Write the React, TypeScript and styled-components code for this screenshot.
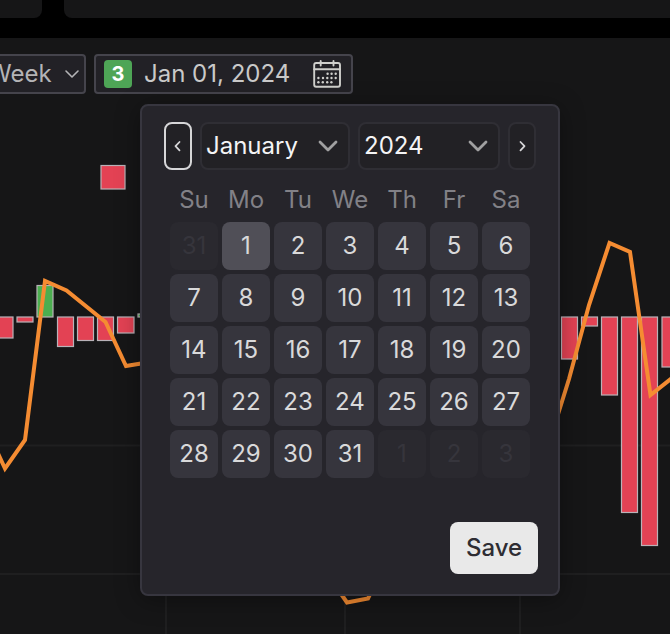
import React, { useState } from "react";
import styled, { createGlobalStyle, css } from "styled-components";

const GlobalStyle = createGlobalStyle`
  *, *::before, *::after { box-sizing: border-box; }
  body {
    margin: 0;
    background: #000;
    color: #c9c9c9;
    font-family: Inter, "Liberation Sans", sans-serif;
    font-size: 24px;
    line-height: 32px;
    overflow: hidden;
  }
  button, select, input { font: inherit; color: inherit; }
`;

const Page = styled.div`
  display: flex;
  flex-direction: column;
  gap: 20px;
  min-height: 100vh;
  overflow: hidden;
`;

const CardRow = styled.div`
  display: grid;
  grid-template-columns: 42px 1fr;
  gap: 22px;
`;

const CardEdge = styled.div<{ $side: "left" | "right" }>`
  height: 18px;
  background: #161617;
  border-radius: ${(p) => (p.$side === "left" ? "0 0 8px 0" : "0 0 0 8px")};
`;

const Panel = styled.main`
  flex: 1;
  display: flex;
  flex-direction: column;
  background: #161617;
`;

const Toolbar = styled.div`
  display: flex;
  gap: 8px;
  margin-left: -22px;
  padding-top: 16px;
`;

const SelectBox = styled.div<{ $kind: "toolbar" | "calendar" }>`
  display: grid;
  align-items: center;
  ${(p) =>
    p.$kind === "toolbar"
      ? css`
          width: 108px;
        `
      : css`
          flex: 1 1 auto;
          min-width: 0;
        `}
  > * {
    grid-area: 1 / 1;
  }
  > svg {
    justify-self: end;
    margin-right: ${(p) => (p.$kind === "toolbar" ? 5 : 11)}px;
    pointer-events: none;
  }
`;

const Select = styled.select<{ $kind: "toolbar" | "calendar" }>`
  appearance: none;
  width: 100%;
  outline: none;
  ${(p) =>
    p.$kind === "toolbar"
      ? css`
          height: 40px;
          padding: 0 0 0 8px;
          background: #222126;
          border: 2px solid #45444c;
          border-radius: 4px;
          color: #b4b4b6;
        `
      : css`
          height: 48px;
          padding: 0 0 0 4px;
          background: #222125;
          border: 2px solid #2f2e34;
          border-radius: 8px;
          color: #f4f4f5;
        `}
`;

const DateField = styled.div`
  position: relative;
`;

const DateButton = styled.button`
  display: flex;
  align-items: center;
  width: 259px;
  height: 40px;
  padding: 0 9px 0 8px;
  background: #222126;
  border: 2px solid #45444c;
  border-radius: 4px;
  color: #c9c9c9;
  white-space: nowrap;

  svg {
    margin-left: auto;
  }
`;

const CountBadge = styled.span`
  width: 28px;
  height: 28px;
  margin-right: 12px;
  border-radius: 4px;
  background: #4ea556;
  color: #fff;
  font-size: 20px;
  font-weight: 700;
  line-height: 28px;
  text-align: center;
`;

const Popover = styled.section`
  position: absolute;
  top: 50px;
  left: 46px;
  width: 420px;
  display: flex;
  flex-direction: column;
  padding: 16px 20px 20px;
  background: #26252b;
  border: 2px solid #37363f;
  border-radius: 8px;
  box-shadow: 0 4px 24px rgba(0, 0, 0, 0.35);
`;

const MonthBar = styled.div`
  display: flex;
  gap: 8px;
  padding: 0 2px;

  > div:nth-of-type(1) {
    flex-basis: 150px;
  }
  > div:nth-of-type(2) {
    flex-basis: 142px;
  }
`;

const StepButton = styled.button`
  display: grid;
  place-items: center;
  flex: 0 0 28px;
  height: 48px;
  padding: 0;
  background: #222125;
  border: 2px solid #2f2e34;
  border-radius: 8px;
  color: #d6d6d8;

  &:focus {
    outline: none;
    border-color: #d6d6d8;
  }
`;

const Calendar = styled.table`
  align-self: center;
  margin-top: 8px;
  border-collapse: separate;
  border-spacing: 4px;
`;

const Weekday = styled.th`
  width: 48px;
  height: 36px;
  padding: 0;
  color: #828187;
  font-weight: 400;
`;

const DayCell = styled.td`
  padding: 0;
`;

const DayButton = styled.button<{ $outside: boolean; $selected: boolean }>`
  display: block;
  width: 48px;
  height: 48px;
  padding: 0;
  border: 0;
  border-radius: 8px;
  text-align: center;
  background: ${(p) => (p.$selected ? "#504f57" : p.$outside ? "#2a292f" : "#36353d")};
  color: ${(p) => (p.$outside ? "#36353c" : "#d9d9da")};
`;

const Actions = styled.div`
  display: flex;
  justify-content: flex-end;
  margin-top: 40px;
`;

const SaveButton = styled.button`
  width: 88px;
  height: 52px;
  padding: 0;
  border: 0;
  border-radius: 8px;
  background: #e9e9e9;
  color: #2e2d33;
  font-weight: 500;
`;

const ChartSvg = styled.svg`
  display: block;
  flex: 1;
  width: 100%;
  min-height: 540px;
`;

const Chevron = ({ size }: { size: "small" | "large" }) =>
  size === "small" ? (
    <svg width="18" height="12" viewBox="0 0 18 12" fill="none" stroke="#b4b4b6" strokeWidth="1.6" strokeLinecap="round" strokeLinejoin="round" aria-hidden="true">
      <path d="M3 3l6 6 6-6" />
    </svg>
  ) : (
    <svg width="22" height="16" viewBox="0 0 22 16" fill="none" stroke="#a0a0a1" strokeWidth="2.8" strokeLinecap="round" strokeLinejoin="round" aria-hidden="true">
      <path d="M3 4l8 8 8-8" />
    </svg>
  );

const StepIcon = ({ direction }: { direction: "prev" | "next" }) => (
  <svg width="12" height="14" viewBox="0 0 12 14" fill="none" stroke="currentColor" strokeWidth="1.8" strokeLinecap="round" strokeLinejoin="round" aria-hidden="true">
    <path d={direction === "prev" ? "M7.5 3L3.500 7.2l4 4.2" : "M4.500 3l4 4.200-4 4.200"} />
  </svg>
);

const iconDots = [
  [15.6, 14.7], [19.6, 14.7], [23.7, 14.7],
  [6.4, 19], [11, 19], [15.3, 19], [19.5, 19], [23.7, 19],
  [6.4, 23.3], [10.8, 23.3], [15.2, 23.3], [19.4, 23.3],
];

const CalendarIcon = () => (
  <svg width="30" height="30" viewBox="0 0 30 30" fill="none" stroke="#cfcfcc" strokeWidth="1.9" strokeLinecap="round" aria-hidden="true">
    <rect x="2.200" y="4" width="25.800" height="23.800" rx="2" />
    <path d="M2.200 10.300h25.800M8.700 2v4.500M21.500 2v4.500" />
    {iconDots.map(([x, y]) => (
      <circle key={`${x}-${y}`} cx={x} cy={y} r="1.2" fill="#cfcfcc" stroke="none" />
    ))}
  </svg>
);

const bars = [
  { x: -4, y: 223, w: 17, h: 21 },
  { x: 17, y: 223, w: 16, h: 5 },
  { x: 37, y: 191.5, w: 16, h: 31.5, up: true },
  { x: 57.5, y: 223, w: 16, h: 29.5 },
  { x: 77.5, y: 223, w: 16, h: 23.5 },
  { x: 97.5, y: 223, w: 16, h: 23.5 },
  { x: 117.5, y: 223, w: 16.5, h: 16 },
  { x: 138, y: 220, w: 16, h: 3, up: true },
  { x: 101, y: 71.5, w: 24, h: 23.5 },
  { x: 561.5, y: 223, w: 16, h: 42 },
  { x: 581.5, y: 223, w: 16, h: 9 },
  { x: 601.5, y: 223, w: 16, h: 78 },
  { x: 621.5, y: 223, w: 16, h: 195.5 },
  { x: 641.5, y: 223, w: 16, h: 228.5 },
  { x: 662, y: 223, w: 16, h: 50 },
];

const Chart = () => (
  <ChartSvg role="img" aria-label="Weekly results with trend line">
    <path d="M0 351.5H3000M0 480H3000M166 30V3000M345 30V3000M520 30V3000" stroke="#1f1f20" strokeWidth="2" />
    {bars.map((b) => (
      <rect key={`${b.x}-${b.y}`} x={b.x} y={b.y} width={b.w} height={b.h} fill={b.up ? "#4cae50" : "#e34254"} stroke="#b9b2b8" strokeWidth="1.2" />
    ))}
    <g fill="none" stroke="#f58c32" strokeWidth="4">
      <path d="M-6 351L5 374.5L25 346L45 187L66.5 196.5L105.5 228L126 272L150 268" />
      <path d="M330 484L347 508.5L368 504.5L375 490" />
      <path d="M550 346L569 285L589 211L609.5 149L630 158L650.5 301L672 284" />
    </g>
  </ChartSvg>
);

const months = ["January", "February", "March", "April", "May", "June", "July", "August", "September", "October", "November", "December"];
const weekdays = ["Su", "Mo", "Tu", "We", "Th", "Fr", "Sa"];
const weeks = [0, 1, 2, 3, 4].map((week) =>
  weekdays.map((_, i) => {
    const n = week * 7 + i;
    if (n === 0) return { day: 31, outside: true };
    return n > 31 ? { day: n - 31, outside: true } : { day: n, outside: false };
  })
);

export default function App() {
  const [selected, setSelected] = useState(1);

  return (
    <>
      <GlobalStyle />
      <Page>
        <CardRow>
          <CardEdge $side="left" />
          <CardEdge $side="right" />
        </CardRow>
        <Panel>
          <Toolbar>
            <SelectBox $kind="toolbar">
              <Select $kind="toolbar" aria-label="Period" defaultValue="Week">
                <option>Week</option>
                <option>Month</option>
              </Select>
              <Chevron size="small" />
            </SelectBox>
            <DateField>
              <DateButton type="button" aria-haspopup="dialog" aria-expanded="true">
                <CountBadge>3</CountBadge>
                Jan 01, 2024
                <CalendarIcon />
              </DateButton>
              <Popover role="dialog" aria-label="Choose a date">
                <MonthBar>
                  <StepButton type="button" aria-label="Previous month" autoFocus>
                    <StepIcon direction="prev" />
                  </StepButton>
                  <SelectBox $kind="calendar">
                    <Select $kind="calendar" aria-label="Month" defaultValue="January">
                      {months.map((m) => (
                        <option key={m}>{m}</option>
                      ))}
                    </Select>
                    <Chevron size="large" />
                  </SelectBox>
                  <SelectBox $kind="calendar">
                    <Select $kind="calendar" aria-label="Year" defaultValue="2024">
                      <option>2023</option>
                      <option>2024</option>
                      <option>2025</option>
                    </Select>
                    <Chevron size="large" />
                  </SelectBox>
                  <StepButton type="button" aria-label="Next month">
                    <StepIcon direction="next" />
                  </StepButton>
                </MonthBar>
                <Calendar>
                  <thead>
                    <tr>
                      {weekdays.map((d) => (
                        <Weekday key={d} scope="col">{d}</Weekday>
                      ))}
                    </tr>
                  </thead>
                  <tbody>
                    {weeks.map((week, w) => (
                      <tr key={w}>
                        {week.map(({ day, outside }, i) => (
                          <DayCell key={i}>
                            <DayButton
                              type="button"
                              disabled={outside}
                              $outside={outside}
                              $selected={!outside && day === selected}
                              onClick={() => setSelected(day)}
                            >
                              {day}
                            </DayButton>
                          </DayCell>
                        ))}
                      </tr>
                    ))}
                  </tbody>
                </Calendar>
                <Actions>
                  <SaveButton type="button">Save</SaveButton>
                </Actions>
              </Popover>
            </DateField>
          </Toolbar>
          <Chart />
        </Panel>
      </Page>
    </>
  );
}
